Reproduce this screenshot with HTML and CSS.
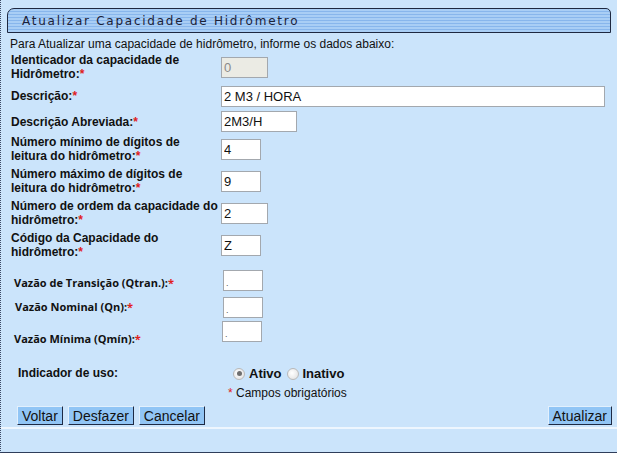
FILE: index.html
```html
<!DOCTYPE html>
<html lang="pt-BR">
<head>
<meta charset="utf-8">
<title>Atualizar Capacidade de Hidrômetro</title>
<link rel="stylesheet" href="styles.css">
</head>
<body>
<div class="page">
  <div class="titlebar"><span class="title">Atualizar Capacidade de Hidrômetro</span></div>
  <div class="intro">Para Atualizar uma capacidade de hidrômetro, informe os dados abaixo:</div>
  <div class="form">
    <div class="row r1">
      <div class="lbl">Identicador da capacidade de<br>Hidrômetro:<span class="req">*</span></div>
      <input class="inp w47 dis" value="0" disabled>
    </div>
    <div class="row r2">
      <div class="lbl">Descrição:<span class="req">*</span></div>
      <input class="inp w384" value="2 M3 / HORA">
    </div>
    <div class="row r3">
      <div class="lbl">Descrição Abreviada:<span class="req">*</span></div>
      <input class="inp w76" value="2M3/H">
    </div>
    <div class="row r4">
      <div class="lbl">Número mínimo de dígitos de<br>leitura do hidrômetro:<span class="req">*</span></div>
      <input class="inp w40" value="4">
    </div>
    <div class="row r5">
      <div class="lbl">Número máximo de dígitos de<br>leitura do hidrômetro:<span class="req">*</span></div>
      <input class="inp w40" value="9">
    </div>
    <div class="row r6">
      <div class="lbl">Número de ordem da capacidade do<br>hidrômetro:<span class="req">*</span></div>
      <input class="inp w47" value="2">
    </div>
    <div class="row r7">
      <div class="lbl">Código da Capacidade do<br>hidrômetro:<span class="req">*</span></div>
      <input class="inp w40" value="Z">
    </div>
    <div class="row vrow v1">
      <div class="vlbl">Vazão de Transição (Qtran.):<span class="req">*</span></div>
      <input class="inp w40 dot" value=".">
    </div>
    <div class="row vrow v2">
      <div class="vlbl">Vazão Nominal (Qn):<span class="req">*</span></div>
      <input class="inp w40 dot" value=".">
    </div>
    <div class="row vrow v3">
      <div class="vlbl">Vazão Mínima (Qmín):<span class="req">*</span></div>
      <input class="inp w40 dot" value=".">
    </div>
    <div class="row urow">
      <div class="ulbl">Indicador de uso:</div>
      <div class="radios">
        <label class="radio"><span class="rb on"></span>Ativo</label>
        <label class="radio"><span class="rb"></span>Inativo</label>
      </div>
    </div>
    <div class="obrig"><span class="req">*</span> Campos obrigatórios</div>
  </div>
  <div class="buttons">
    <div class="left">
      <button class="btn">Voltar</button>
      <button class="btn">Desfazer</button>
      <button class="btn">Cancelar</button>
    </div>
    <button class="btn">Atualizar</button>
  </div>
  <div class="footer"></div>
</div>
</body>
</html>
```

FILE: styles.css
```css
html, body {
  margin: 0;
  padding: 0;
  background: #ffffff;
}

.page {
  width: 617px;
  height: 453px;
  box-sizing: border-box;
  background: #cbe4fb;
  border-left: 1px dotted #3c4a66;
  border-bottom: 1px solid #2f3d5a;
  display: flex;
  flex-direction: column;
  font-family: "Liberation Sans", Arial, sans-serif;
  color: #111;
}

.titlebar {
  margin: 8px 6px 0 6px;
  height: 25px;
  box-sizing: border-box;
  border: 1px solid #1e2840;
  border-radius: 7px 5px 0 0;
  background: repeating-linear-gradient(to bottom, #a9cef5 0px, #a9cef5 2px, #88b6ec 2px, #88b6ec 3px);
  display: flex;
  align-items: center;
  padding-left: 14px;
}

.title {
  font-family: "DejaVu Sans", Verdana, sans-serif;
  font-size: 12px;
  letter-spacing: 1.75px;
  color: #1c2238;
}

.intro {
  margin-top: 3px;
  padding-left: 9px;
  font-size: 12px;
  line-height: 16px;
  height: 16px;
}

.form {
  margin-top: 1px;
  display: flex;
  flex-direction: column;
}

.row {
  display: grid;
  grid-template-columns: 210px auto;
  align-items: center;
  padding-left: 10px;
}

.lbl {
  font-weight: bold;
  font-size: 12px;
  line-height: 14px;
  white-space: nowrap;
}

.req {
  color: #e0201a;
  font-weight: normal;
}

.lbl .req, .vlbl .req {
  font-weight: bold;
}

.r1 { height: 28px; }
.r2 { height: 30px; }
.r3 { height: 20px; }
.r4 { height: 36px; }
.r5 { height: 28px; }
.r6 { height: 36px; }
.r7 { height: 28px; }

.inp {
  height: 21px;
  box-sizing: border-box;
  border: 1px solid #a3a8ae;
  background: #ffffff;
  font-family: "Liberation Sans", Arial, sans-serif;
  font-size: 13px;
  color: #111;
  padding: 0 2px;
  margin: 0;
  outline: none;
}

.dis {
  background: #ebebe4;
  color: #8a8a8a;
}

.w40 { width: 40px; }
.w47 { width: 47px; }
.w76 { width: 76px; }
.w384 { width: 384px; }

.dot {
  font-size: 9px;
  padding-top: 4px;
  color: #555;
}

.vrow {
  align-items: start;
  grid-template-columns: 209px auto;
  padding-left: 13px;
}

.vlbl {
  font-family: "Open Sans", "DejaVu Sans", sans-serif;
  font-weight: bold;
  font-size: 11px;
  line-height: 14px;
  white-space: nowrap;
}

.v1 { height: 34px; }
.v1 .vlbl { margin-top: 17px; }
.v1 .inp { margin-top: 11px; }

.v2 { height: 26px; }
.v2 .vlbl { margin-top: 7px; margin-left: 1px; }
.v2 .inp { margin-top: 4px; }

.v3 { height: 30px; }
.v3 .vlbl { margin-top: 13px; }
.v3 .inp { margin-top: 2px; margin-left: -1px; }

.urow {
  height: 34px;
  align-items: start;
  grid-template-columns: 215px auto;
  padding-left: 17px;
}

.ulbl {
  margin-top: 17px;
  font-weight: bold;
  font-size: 12px;
  line-height: 14px;
}

.radios {
  margin-top: 17px;
  display: flex;
  gap: 5px;
}

.radio {
  display: flex;
  align-items: center;
  gap: 4px;
  font-weight: bold;
  font-size: 13px;
  line-height: 15px;
}

.rb {
  width: 12px;
  height: 12px;
  box-sizing: border-box;
  border-radius: 50%;
  border: 1px solid #b9b9b9;
  background: radial-gradient(circle at 40% 40%, #ffffff 0%, #dedede 100%);
  position: relative;
}

.rb.on::after {
  content: "";
  position: absolute;
  left: 2.5px;
  top: 2.5px;
  width: 5px;
  height: 5px;
  border-radius: 50%;
  background: #6e6e6e;
}

.obrig {
  height: 20px;
  padding-left: 227px;
  padding-top: 3px;
  box-sizing: border-box;
  font-size: 12px;
  line-height: 14px;
}

.buttons {
  margin-top: 3px;
  height: 21px;
  display: flex;
  justify-content: space-between;
  align-items: flex-start;
  padding: 0 5px 0 16px;
}

.left {
  display: flex;
  gap: 5px;
}

.btn {
  height: 19px;
  box-sizing: border-box;
  padding: 0 4px;
  margin: 0;
  font-family: "Liberation Sans", Arial, sans-serif;
  font-size: 14px;
  line-height: 16px;
  color: #111;
  background: #91c5f5;
  border-top: 1px solid #e2f0fd;
  border-left: 1px solid #e2f0fd;
  border-right: 1px solid #1d2a44;
  border-bottom: 1px solid #1d2a44;
  border-radius: 0;
}

.footer {
  flex: 1;
  border-top: 2px solid #eef6fe;
}
```
